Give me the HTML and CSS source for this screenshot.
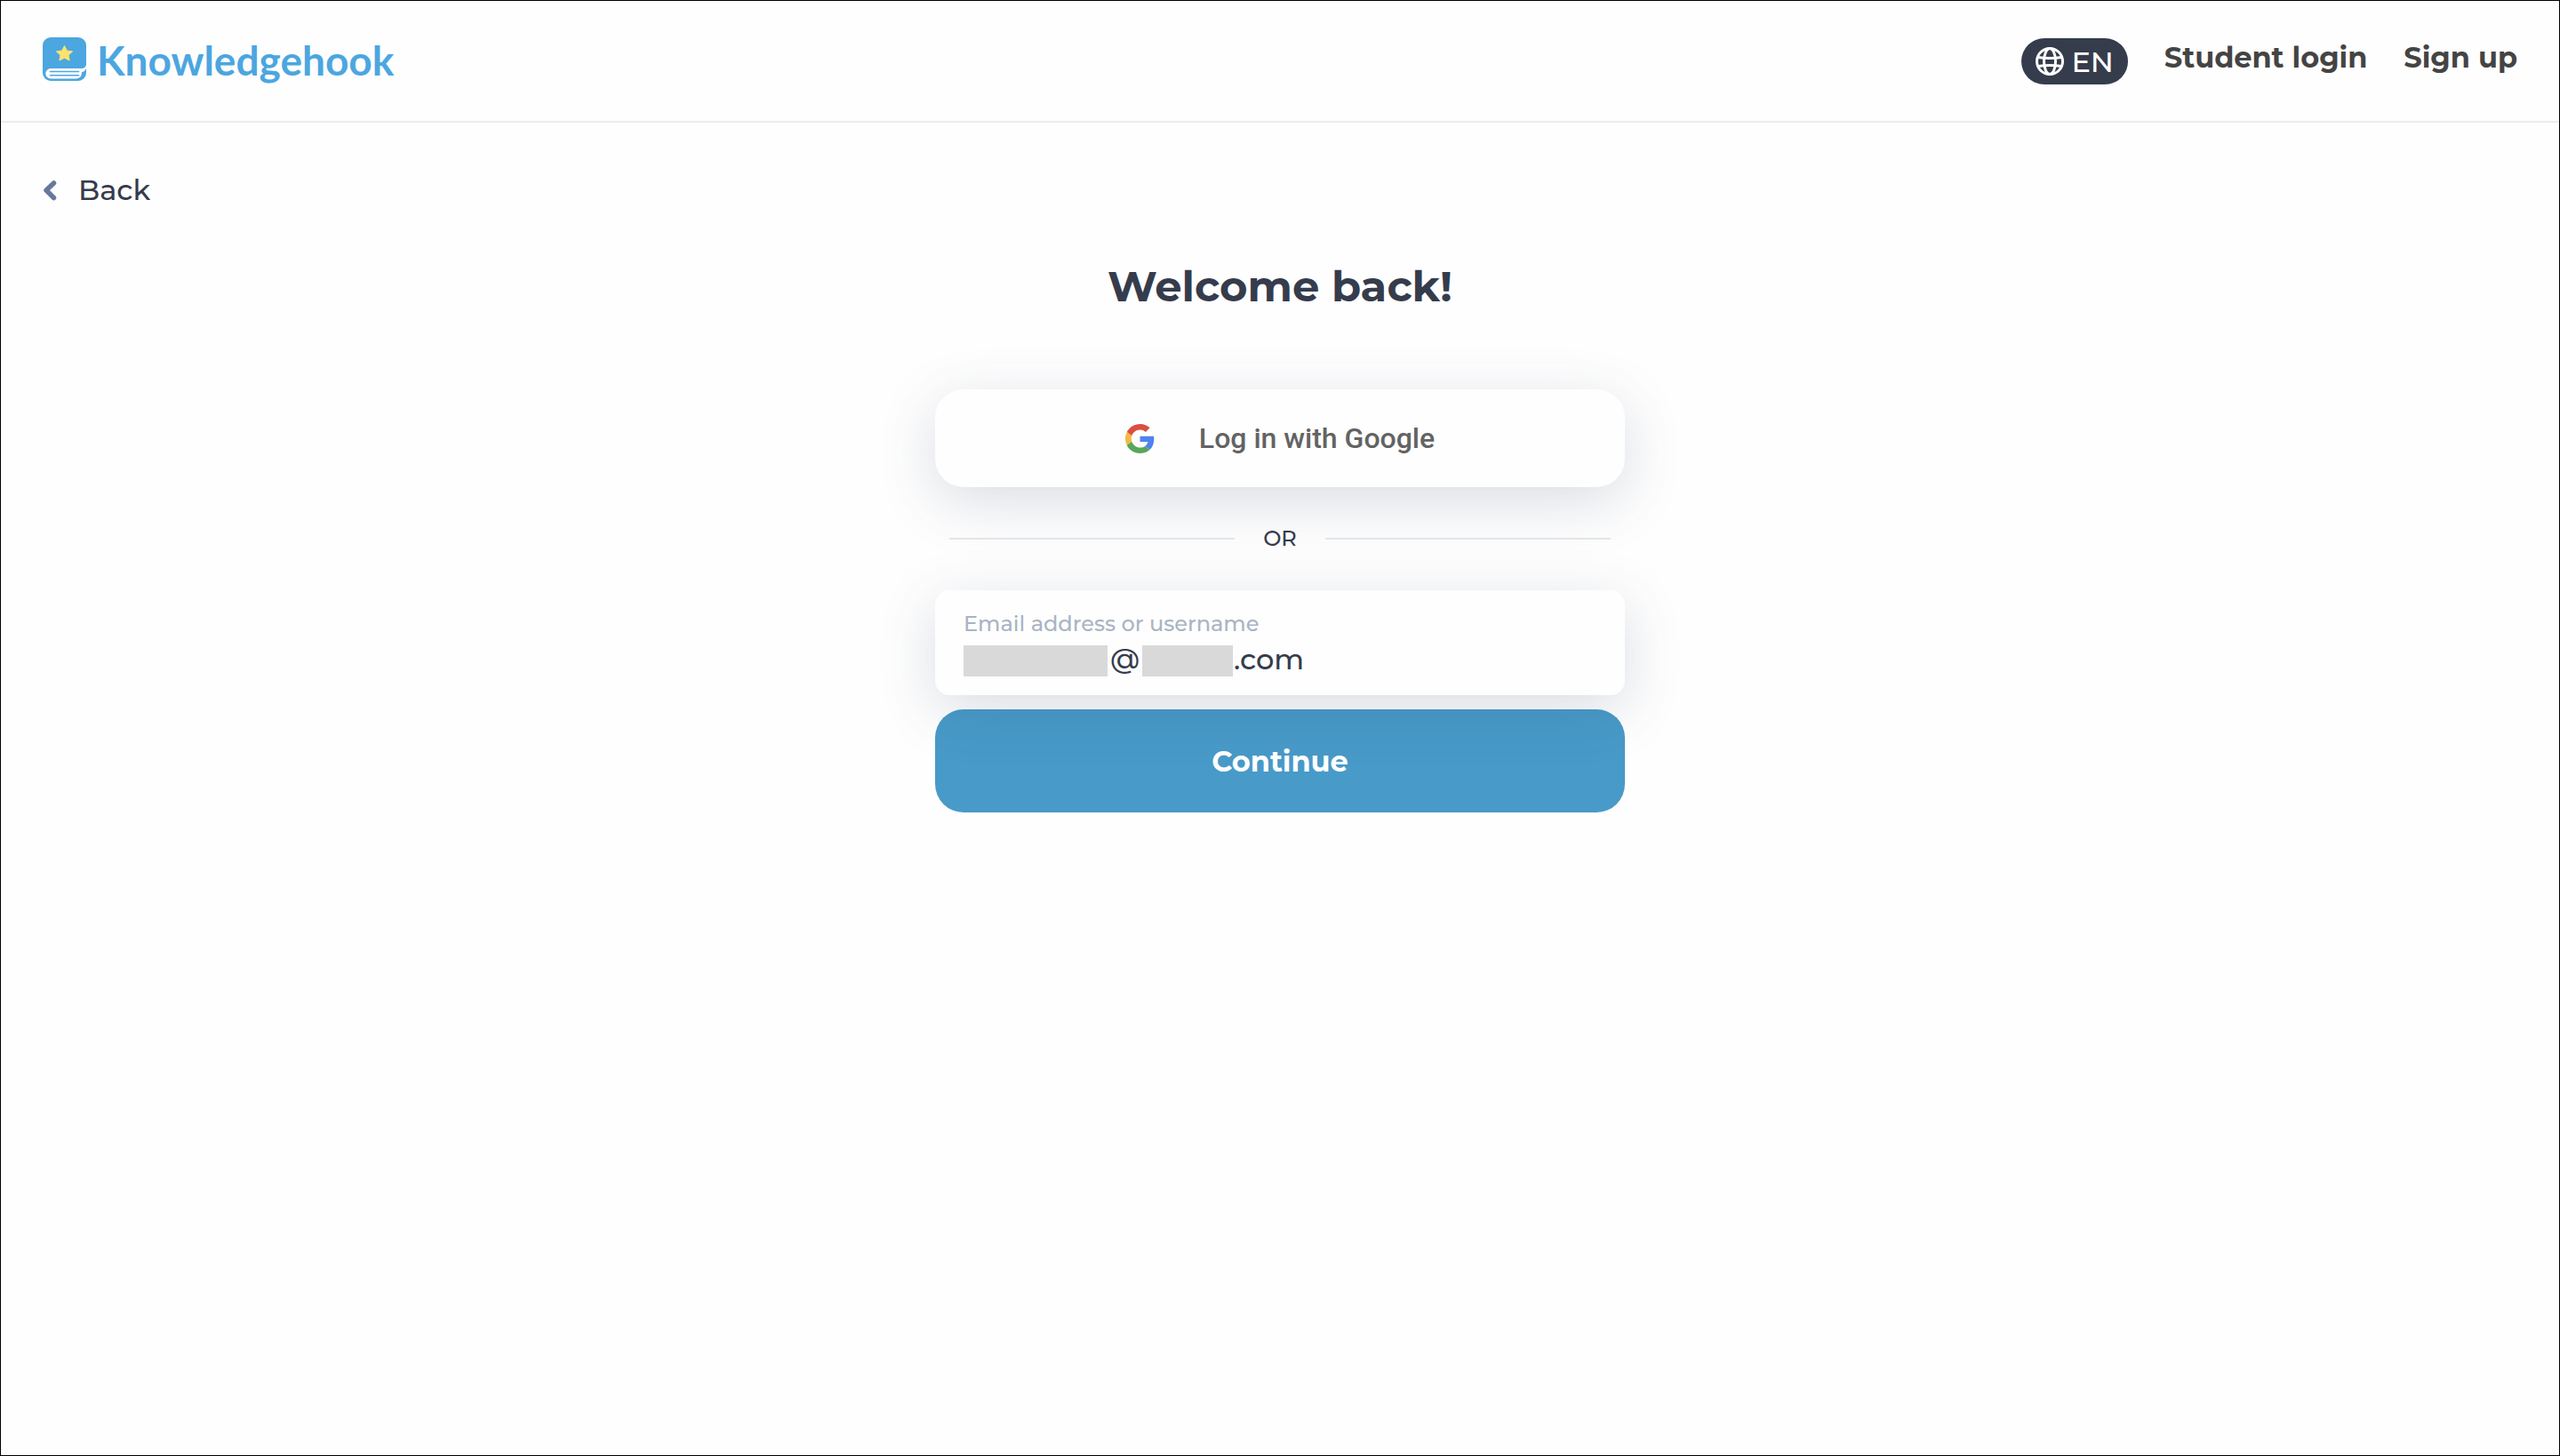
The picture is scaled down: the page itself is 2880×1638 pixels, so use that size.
FILE: index.html
```html
<!DOCTYPE html>
<html lang="en">
<head>
  <meta charset="UTF-8">
  <meta name="viewport" content="width=device-width, initial-scale=1.0">
  <title>Log in | Knowledgehook</title>
  <link rel="stylesheet" href="styles.css">
</head>
<body>

  <!-- Header -->
  <header class="header">
    <a class="logo" href="#">
      <svg class="logo-icon" viewBox="0 0 49 49" aria-hidden="true">
        <rect width="49" height="49" rx="9" fill="#4ca6e0"/>
        <path d="M49 30.500C48.500 34 46.500 35 43 35H9a5.700 5.700 0 0 0 0 11.400H37.500C42 46.400 44 43.500 44 39.300C47 38.500 49 36.500 49 34z" fill="#fff"/>
        <path d="M8.500 38.500H40.500M8.500 42.800H40.500" stroke="#4ca6e0" stroke-width="1.600" stroke-linecap="round"/>
        <path d="M24.500 9.500L27.300 15L33.600 15.900L29 20.100L30.200 26L24.500 23.200L18.800 26L20 20.100L15.400 15.900L21.700 15z" fill="#fbe36f" stroke="#fbe36f" stroke-width="1" stroke-linejoin="round"/>
      </svg>
      <span class="logo-text">Knowledgehook</span>
    </a>

    <nav class="nav">
      <button class="language" type="button" aria-label="Language: EN">
        <svg class="globe" viewBox="0 0 32 32" fill="none" stroke="#fff" stroke-width="3" aria-hidden="true">
          <circle cx="16" cy="16" r="14.500"/>
          <ellipse cx="16" cy="16" rx="6.500" ry="14.500"/>
          <path d="M3 11.500Q16 13.500 29 11.500M3 21.500Q16 19.500 29 21.500"/>
        </svg>
        EN
      </button>
      <a class="nav-link" href="#">Student login</a>
      <a class="nav-link" href="#">Sign up</a>
    </nav>
  </header>

  <a class="back" href="#">
    <svg class="chevron" viewBox="0 0 16 24" aria-hidden="true">
      <path d="M12.500 4L4 12L12.500 20.500" fill="none" stroke="#67799b" stroke-width="5.500" stroke-linecap="round" stroke-linejoin="round"/>
    </svg>
    Back
  </a>

  <!-- Login Form -->
  <main class="login">
    <h1>Welcome back!</h1>

    <button class="google-button" type="button">
      <svg class="google-icon" viewBox="0 0 48 48" aria-hidden="true">
        <path fill="#db4f40" d="M24 9.500c3.540 0 6.710 1.220 9.210 3.600l6.850-6.850C35.900 2.380 30.470 0 24 0 14.620 0 6.510 5.380 2.560 13.220l7.980 6.190C12.430 13.720 17.740 9.500 24 9.500z"/>
        <path fill="#4f83ed" d="M46.980 24.550c0-1.570-.150-3.090-.380-4.550H24v9.020h12.940c-.580 2.960-2.260 5.480-4.780 7.180l7.730 6c4.510-4.180 7.090-10.360 7.090-17.650z"/>
        <path fill="#f0bb41" d="M10.530 28.590c-.480-1.450-.760-2.990-.760-4.590s.270-3.140.760-4.590l-7.980-6.190C.920 16.460 0 20.120 0 24c0 3.880.920 7.540 2.560 10.780l7.970-6.190z"/>
        <path fill="#58a55c" d="M24 48c6.480 0 11.930-2.130 15.890-5.810l-7.730-6c-2.150 1.450-4.920 2.300-8.160 2.300-6.260 0-11.570-4.220-13.470-9.910l-7.980 6.190C6.510 42.620 14.620 48 24 48z"/>
      </svg>
      Log in with Google
    </button>

    <div class="divider">OR</div>

    <form class="login-form">
      <div class="field">
        <label for="username">Email address or username</label>
        <div class="field-value">
          <span class="hidden-name"></span>
          <span class="at">@</span>
          <span class="hidden-domain"></span>
          <input type="text" id="username" value=".com">
        </div>
      </div>
      <button class="continue-button" type="button">Continue</button>
    </form>
  </main>

</body>
</html>
```
FILE: styles.css
```css
/* General Styles */
* {
  box-sizing: border-box;
}

body {
  margin: 0;
  min-height: 100vh;
  border: 1px solid #000;
  background: #fefefe;
  color: #353c4c;
  font-family: Montserrat, Inter, sans-serif;
  font-size: 32px;
  font-weight: 500;
}

a {
  color: inherit;
  text-decoration: none;
}

button,
input {
  border: none;
  font: inherit;
  color: inherit;
}

button {
  cursor: pointer;
}

/* Header */
.header {
  display: flex;
  justify-content: space-between;
  align-items: flex-start;
  height: 137px;
  padding: 41px 47px 0;
  border-bottom: 2px solid #ebebeb;
}

.logo {
  display: flex;
  gap: 12px;
}

.logo-icon {
  width: 49px;
  height: 49px;
}

.logo-text {
  color: #4ca6e0;
  font-family: Lato, sans-serif;
  font-size: 46px;
  font-weight: 700;
  line-height: 52px;
}

.nav {
  display: flex;
  gap: 41px;
}

.language {
  display: flex;
  align-items: center;
  gap: 8px;
  height: 52px;
  margin-top: 1px;
  padding: 0 16px;
  border-radius: 26px;
  background: #353c4c;
  color: #fff;
}

.globe {
  width: 32px;
  height: 32px;
}

.nav-link {
  color: #444;
  font-weight: 700;
  line-height: 46px;
}

/* Back Link */
.back {
  display: inline-flex;
  align-items: center;
  gap: 24px;
  padding: 56px 47px 0;
  line-height: 40px;
}

.chevron {
  width: 16px;
  height: 24px;
}

/* Login */
.login {
  width: 100%;
  max-width: 776px;
  margin: 0 auto;
}

h1 {
  margin: 56px 0 84px;
  font-size: 48px;
  font-weight: 700;
  line-height: 64px;
  text-align: center;
}

.google-button {
  display: flex;
  justify-content: center;
  align-items: center;
  gap: 50px;
  width: 100%;
  height: 110px;
  border-radius: 32px;
  background: #fefefe;
  box-shadow: 0 16px 64px rgba(53, 72, 104, 0.18);
  color: #636363;
  font-family: Roboto, sans-serif;
}

.google-icon {
  width: 33px;
  height: 33px;
}

.divider {
  display: flex;
  align-items: center;
  gap: 32px;
  margin: 40px 16px;
  font-size: 24px;
  line-height: 36px;
}

.divider::before,
.divider::after {
  content: "";
  flex: 1;
  height: 2px;
  background: #e3e5ea;
}

.field {
  position: relative;
  z-index: 1;
  height: 118px;
  margin-bottom: 16px;
  padding: 22px 32px 0;
  border-radius: 16px;
  background: #fefefe;
  box-shadow: 0 16px 64px rgba(53, 72, 104, 0.18);
}

.field label {
  display: block;
  color: #a9b4c4;
  font-size: 24px;
  line-height: 32px;
}

.field-value {
  display: flex;
  align-items: flex-start;
  margin-top: 8px;
  line-height: 30px;
}

/* Masked parts of the address */
.hidden-name,
.hidden-domain {
  height: 35px;
  background: #d9d9d9;
}

.hidden-name {
  width: 162px;
}

.hidden-domain {
  width: 102px;
}

.at {
  padding: 0 3px;
}

.field input {
  flex: 1;
  min-width: 0;
  height: 30px;
  padding: 0 0 0 1px;
  background: none;
  outline: none;
}

.continue-button {
  width: 100%;
  height: 116px;
  border-radius: 32px;
  background: #489ac8;
  color: #fff;
  font-weight: 700;
}
```
